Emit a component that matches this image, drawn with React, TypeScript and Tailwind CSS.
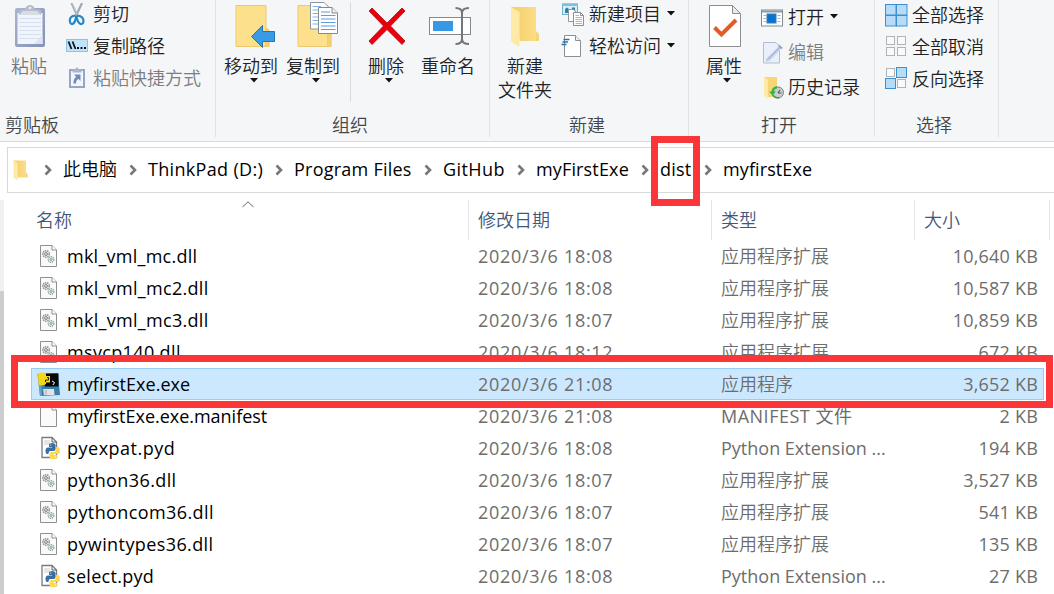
import React, { type ReactNode } from "react";

function Caret() {
  return (
    <svg width="8" height="5" viewBox="0 0 8 5" className="shrink-0">
      <path d="M0 0H8L4 4.500Z" fill="#111" />
    </svg>
  );
}

/* ---------- large ribbon icons (48 x 50 boxes) ---------- */

function PasteIcon() {
  return (
    <svg width="48" height="50" viewBox="0 0 48 50">
      <defs>
        <linearGradient id="clip" x1="0" y1="0" x2="1" y2="1">
          <stop offset="0" stopColor="#a9b4d2" />
          <stop offset="1" stopColor="#8492b9" />
        </linearGradient>
      </defs>
      <rect x="10" y="8" width="30" height="39" rx="2" fill="url(#clip)" />
      <path d="M12.500 13H37.500V44H12.500Z" fill="#f0f4fb" />
      <path d="M14 18.500H36M14 22.500H36M14 26.500H36M14 30.500H36M14 34.500H36M14 38.500H36" stroke="#d6dfee" />
      <path d="M29 44L37.500 35V44Z" fill="#dde3f0" />
      <path d="M14 15V11Q14 9.500 16 9.500H20Q21 5 25 5T30 9.500H34Q36 9.500 36 11V15Z" fill="#b7bdca" />
      <path d="M14 15L18 11H32L36 15Z" fill="#d9dce3" />
      <circle cx="25" cy="8" r="1.300" fill="#eceef2" />
    </svg>
  );
}

function FolderBase() {
  return (
    <g transform="translate(7.500 0)">
      <path d="M29 32L34 28L36 31V46.500H29Z" fill="#f3cd69" />
      <path d="M2.500 5.500H32.500V46.500H2.500Z" fill="#fde08c" stroke="#edca72" />
      <path d="M32.500 32V46.500H35.500V31L33 28" fill="#f5d477" stroke="#e6c269" strokeWidth=".7" />
    </g>
  );
}

function MoveToIcon() {
  return (
    <svg width="48" height="50" viewBox="0 0 48 50" className="relative -left-px overflow-visible">
      <FolderBase />
      <path d="M25.500 36.500L36.500 25.500V31.500H48.500V41.500H36.500V47.500Z" fill="#399be6" stroke="#2477b7" />
    </svg>
  );
}

function CopyToIcon() {
  return (
    <svg width="48" height="50" viewBox="0 0 48 50" className="relative -left-px overflow-visible">
      <FolderBase />
      <path d="M22.500 2.500H36L41 7.500V29H22.500Z" fill="#fff" stroke="#8d969f" />
      <path d="M24.500 6.500H33M24.500 10H30M24.500 13.500H30M24.500 17H30M24.500 20.500H30M24.500 24H30" stroke="#83b4e2" />
      <path d="M30.500 7.500H44L49.500 13V33.500H30.500Z" fill="#fff" stroke="#818a93" />
      <path d="M44 7.500V13H49.500" fill="#eee" stroke="#818a93" />
      <path d="M33 12H42M33 15.500H47.500M33 19H47.500M33 22.500H47.500M33 26H47.500M33 29.500H47.500" stroke="#5b9ce2" strokeWidth="1.200" />
    </svg>
  );
}

function DeleteIcon() {
  return (
    <svg width="48" height="50" viewBox="0 0 48 50">
      <path d="M7 11L10 8L25 23L40 8L43 11L28.500 26L43 41L40 44.500L25 29.500L10 44.500L7 41L21.500 26Z" fill="#e8000d" stroke="#b9000c" strokeWidth=".8" />
    </svg>
  );
}

function RenameIcon() {
  return (
    <svg width="48" height="50" viewBox="0 0 48 50">
      <rect x="5.500" y="17.500" width="41" height="17" fill="#fff" stroke="#85898c" />
      <rect x="9" y="21" width="20" height="10" fill="#3799e5" />
      <path d="M31.500 8C35 8 38 9 38 13V39C38 43 35 44 31.500 44M45 8C41 8 38 9 38 13M45 44C41 44 38 43 38 39" fill="none" stroke="#70777b" strokeWidth="2" />
    </svg>
  );
}

function OpenFolder({ small = false }: { small?: boolean }) {
  return (
    <svg width={small ? 15 : 48} height={small ? 23 : 50} viewBox={small ? "9 4 30 46" : "0 0 48 50"}>
      <defs>
        <linearGradient id="folder" x1="0" x2="1">
          <stop offset="0" stopColor="#f4cc67" />
          <stop offset="1" stopColor="#fde08b" />
        </linearGradient>
      </defs>
      <path d="M10 7H35V32L38 36V41H19Z" fill="url(#folder)" />
      <path d="M35 31L38 34V41H35Z" fill="#f5d47a" />
      <path d="M10 7L18.500 12V47L10 41.500Z" fill="#ffe9a7" />
    </svg>
  );
}

function PropertiesIcon() {
  return (
    <svg width="48" height="50" viewBox="0 0 48 50">
      <path d="M9.500 5.500H32.500L40.500 13.500V46.500H9.500Z" fill="#fff" stroke="#8e8e8e" />
      <path d="M32.500 5.500V13.500H40.500Z" fill="#eaeaea" stroke="#8e8e8e" />
      <path d="M14.500 27.500L21.500 34.500L36 20" fill="none" stroke="#e65b24" strokeWidth="4" />
    </svg>
  );
}

/* ---------- small ribbon icons (24 x 24 boxes) ---------- */

function Small({ children }: { children: ReactNode }) {
  return (
    <svg width="24" height="24" viewBox="0 0 24 24" className="shrink-0">
      {children}
    </svg>
  );
}

function CutIcon() {
  return (
    <Small>
      <path d="M6.500 0L13 14M17 0L10.500 14" stroke="#a3a8ae" strokeWidth="2.200" />
      <path d="M7.200 .5L13 13" stroke="#cfd3d6" strokeWidth=".8" />
      <path d="M10.500 12.500Q4.800 13 4.800 17.500Q5.200 21.500 7.500 21Q10.500 19.500 11.300 13Q12.500 19.500 15.500 21Q18.500 21.500 18.500 17.500Q18 13 12 12.500" fill="none" stroke="#2787c7" strokeWidth="2.200" />
    </Small>
  );
}

function PathIcon() {
  return (
    <Small>
      <rect x="1.500" y="5.500" width="21" height="12" fill="#bfe3fd" stroke="#8cc3ee" />
      <path d="M3.500 7.500L6.500 15M7.500 7.500L10.500 15" stroke="#111" strokeWidth="1.800" />
      <path d="M12 14H14M15.500 14H17.500M19 14H21" stroke="#111" strokeWidth="1.800" />
    </Small>
  );
}

function ShortcutIcon() {
  return (
    <Small>
      <rect x="5" y="3" width="14" height="17" fill="#f3f6fc" stroke="#96a5c8" strokeWidth="2" />
      <path d="M7.500 5.500V2.500H10L12 0L14 2.500H16.500V5.500Z" fill="#aab4cb" />
      <path d="M9 7.500H15.500V14L13.300 11.800Q10.800 13.500 11 16.500H8.500Q8 12.500 11.200 9.700Z" fill="#7589b5" />
    </Small>
  );
}

function NewItemIcon() {
  return (
    <Small>
      <rect x="1.500" y="1" width="15" height="10.500" fill="#d8effb" stroke="#6fb0cb" />
      <path d="M1 .5H17V3H1Z" fill="#82bfd9" />
      <path d="M4 10V6L6 4.500L8 6V10ZM11 4.500H14V8H11Z" fill="#397b9e" />
      <path d="M7.500 6.500H12L14.500 8V18.500H7.500Z" fill="#fff" stroke="#8d989f" />
      <path d="M12.500 9.500H19.500L22.500 12.500V22.500H12.500Z" fill="#fff" stroke="#8b8f94" />
      <path d="M19.500 9.500V12.500H22.500" fill="none" stroke="#8b8f94" />
      <path d="M14.500 12.500H18M14.500 14.500H21M14.500 16.500H21M14.500 18.500H21M14.500 20.500H21" stroke="#d48e86" strokeWidth=".8" />
    </Small>
  );
}

function EasyAccessIcon() {
  return (
    <Small>
      <path d="M3.500 .5H14.500L19.500 5.500V21.500H3.500Z" fill="#fff" stroke="#8b8f94" />
      <path d="M14.500 .5V5.500H19.500" fill="#eee" stroke="#8b8f94" />
      <path d="M2.500 4.500H8.500M1.500 7H7M.5 9.500H5.500" stroke="#2d72a8" strokeWidth="1.400" />
    </Small>
  );
}

function OpenIcon() {
  return (
    <Small>
      <rect x="1.500" y="4" width="21" height="16" fill="#fff" stroke="#7f8b93" />
      <path d="M2 4.500H22V6.500H2Z" fill="#8c9ba5" />
      <path d="M3.500 9.500H6M3.500 12.500H6M3.500 15.500H6M17.500 9.500H20.500M17.500 12.500H20.500M17.500 15.500H20.500" stroke="#a4b4bd" />
      <rect x="7" y="8" width="9" height="9" fill="#0873cf" stroke="#2e80ba" />
    </Small>
  );
}

function EditIcon() {
  return (
    <Small>
      <path d="M3.500 1.500H16L19.500 5V22H3.500Z" fill="#eaf0fa" stroke="#b1bdd5" />
      <path d="M6 18L19 5L22 7L9.500 20L5.500 21Z" fill="#c6d2e6" />
      <path d="M7.500 18.500L19.500 6.500" stroke="#98a8c8" strokeWidth="1" />
      <path d="M19 3.500L23 7L21 8L18 5Z" fill="#93a4c5" />
    </Small>
  );
}

function HistoryIcon() {
  return (
    <Small>
      <path d="M4 1H17V21H8Z" fill="#f8d676" />
      <path d="M4 1L8 4V23L4 20Z" fill="#ffe9a7" />
      <circle cx="18" cy="16.500" r="5.500" fill="#c9ced0" stroke="#777f82" />
      <path d="M18 17L20 14M18 17H21.500" fill="none" stroke="#53595c" strokeWidth="1.200" />
      <path d="M17 10Q11.500 11 11.500 15.500H9L12.500 19.500L16 15.500H14Q14 13 17 12.500Z" fill="#39b44a" />
      <path d="M12.500 19Q15 22.500 19 21.500" fill="none" stroke="#479c50" strokeWidth="1.300" />
    </Small>
  );
}

function SelectIcon({ on }: { on: boolean[] }) {
  const all = on.every(Boolean);
  return (
    <Small>
      {on.map((v, i) => (
        <rect
          key={i}
          x={(v ? 1.5 : 2.5) + (i % 2) * 11}
          y={(v ? 0.5 : 1.5) + Math.floor(i / 2) * 11}
          width={v ? (all ? 10.5 : 10) : 8}
          height={v ? (all ? 10.5 : 10) : 8}
          fill={v ? "#b6dcfa" : "#fafafa"}
          stroke={v ? "#3f90ca" : "#b0b2b4"}
        />
      ))}
    </Small>
  );
}

/* ---------- ribbon building blocks ---------- */

function Big({ icon, label, width, caret, muted }: { icon: ReactNode; label: string[]; width: string; caret?: boolean; muted?: boolean }) {
  return (
    <div className={`flex shrink-0 flex-col items-center ${width}`}>
      <div className="h-[54px]">{icon}</div>
      {label.map((l) => (
        <div key={l} className={`h-6 whitespace-nowrap leading-6 ${muted ? "text-[#737578]" : "text-[#222]"}`}>{l}</div>
      ))}
      {caret && <div className="flex pl-[5px]"><Caret /></div>}
    </div>
  );
}

function Row({ icon, label, height, caret, muted }: { icon: ReactNode; label: string; height: string; caret?: boolean; muted?: boolean }) {
  return (
    <div className={`flex items-center whitespace-nowrap ${height}`}>
      {icon}
      <span className={`ml-1 ${muted ? "text-[#7b7d80]" : "text-[#222]"}`}>{label}</span>
      {caret && <span className="-mt-0.5 ml-[6px] flex"><Caret /></span>}
    </div>
  );
}

function Group({ width, pad, label, labelPad, children }: { width: string; pad: string; label: string; labelPad: string; children: ReactNode }) {
  return (
    <div className={`flex h-full shrink-0 flex-col ${width}`}>
      <div className="flex h-[137px] flex-col border-r border-[#e0e2e4]">
        <div className={`flex h-[113px] ${pad}`}>{children}</div>
        <div className={`h-6 leading-6 text-[#444649] ${labelPad}`}>{label}</div>
      </div>
    </div>
  );
}

function Ribbon() {
  return (
    <div className="flex h-[142px] shrink-0 border-b border-[#d9dbdd] bg-[#f5f6f8] font-[350]">
      <Group width="w-[216px]" pad="" label="剪贴板" labelPad="pl-[5px]">
        <Big width="w-[58px]" icon={<PasteIcon />} label={["粘贴"]} muted />
        <div className="ml-[7px]">
          <Row height="h-[29px]" icon={<CutIcon />} label="剪切" />
          <Row height="h-[34px]" icon={<PathIcon />} label="复制路径" />
          <Row height="h-[31px]" icon={<ShortcutIcon />} label="粘贴快捷方式" muted />
        </div>
      </Group>
      <Group width="w-[274px]" pad="pl-[4px]" label="组织" labelPad="pl-[116px]">
        <Big width="w-[62px]" icon={<MoveToIcon />} label={["移动到"]} caret />
        <Big width="w-[62px]" icon={<CopyToIcon />} label={["复制到"]} caret />
        <div className="ml-[6px] mr-[4px] mt-0.5 h-[100px] w-px bg-[#d8dadc]" />
        <Big width="w-[62px]" icon={<DeleteIcon />} label={["删除"]} caret />
        <Big width="w-[62px]" icon={<RenameIcon />} label={["重命名"]} />
      </Group>
      <Group width="w-[199px]" pad="pl-[4px]" label="新建" labelPad="pl-[79px]">
        <Big width="w-[62px]" icon={<OpenFolder />} label={["新建", "文件夹"]} />
        <div className="ml-[5px]">
          <Row height="h-[29px]" icon={<NewItemIcon />} label="新建项目" caret />
          <Row height="h-[35px]" icon={<EasyAccessIcon />} label="轻松访问" caret />
        </div>
      </Group>
      <Group width="w-[186px]" pad="pl-[4px]" label="打开" labelPad="pl-[72px]">
        <Big width="w-[62px]" icon={<PropertiesIcon />} label={["属性"]} caret />
        <div className="ml-[5px]">
          <Row height="h-[35px]" icon={<OpenIcon />} label="打开" caret />
          <Row height="h-[35px]" icon={<EditIcon />} label="编辑" muted />
          <Row height="h-[35px]" icon={<HistoryIcon />} label="历史记录" />
        </div>
      </Group>
      <Group width="w-[124px]" pad="pl-[9px]" label="选择" labelPad="pl-[41px]">
        <div>
          <Row height="h-[31px]" icon={<SelectIcon on={[true, true, true, true]} />} label="全部选择" />
          <Row height="h-[32px]" icon={<SelectIcon on={[false, false, false, false]} />} label="全部取消" />
          <Row height="h-[32px]" icon={<SelectIcon on={[false, true, true, false]} />} label="反向选择" />
        </div>
      </Group>
    </div>
  );
}

/* ---------- address bar ---------- */

const crumbs = [
  { text: "此电脑", width: "w-[85px] font-[350]" },
  { text: "ThinkPad (D:)", width: "w-[146px] tracking-[0.32px]" },
  { text: "Program Files", width: "w-[149px] tracking-[0.24px]" },
  { text: "GitHub", width: "w-[93px] tracking-[0.42px]" },
  { text: "myFirstExe", width: "w-[124px] tracking-[0.15px]" },
  { text: "dist", width: "w-[63px] tracking-[0.2px]" },
  { text: "myfirstExe", width: "w-[140px] tracking-[0.1px]" },
];

function AddressBar() {
  return (
    <div className="ml-[7px] mt-[5px] flex h-[46px] shrink-0 items-center border-y border-l border-[#d6dad8] bg-white pl-[5px]">
      <OpenFolder small />
      <div className="ml-4 flex">
        {crumbs.map((c) => (
          <div key={c.text} className={`flex items-center whitespace-nowrap text-black ${c.width}`}>
            <svg width="19" height="12" viewBox="0 0 19 12" className="shrink-0">
              <path d="M1.500 1.500L6 6L1.500 10.500" fill="none" stroke="#777" strokeWidth="2.600" />
            </svg>
            <span className="-mt-0.5">{c.text}</span>
          </div>
        ))}
      </div>
    </div>
  );
}

/* ---------- file icons ---------- */

function Page({ children }: { children?: ReactNode }) {
  return (
    <svg width="24" height="24" viewBox="0 0 24 24" className="shrink-0">
      <path d="M4.500 1.500H16L20.500 6V22.500H4.500Z" fill="#fafafa" stroke="#8d8f91" />
      <path d="M16 1.500V6H20.500" fill="#fff" stroke="#8d8f91" />
      {children}
    </svg>
  );
}

function DllIcon() {
  return (
    <Page>
      <circle cx="10" cy="10" r="3.300" fill="#e3e5e6" stroke="#97999b" strokeWidth="1.500" strokeDasharray="1.500 .8" />
      <circle cx="10" cy="10" r="1.400" fill="#fff" stroke="#777b7d" />
      <circle cx="15" cy="15.500" r="2.800" fill="#e4efed" stroke="#86a09d" strokeWidth="1.300" strokeDasharray="1.300 .8" />
      <circle cx="15" cy="15.500" r="1" fill="#fff" stroke="#6d8683" strokeWidth=".8" />
    </Page>
  );
}

function PydIcon() {
  return (
    <svg width="24" height="24" viewBox="0 0 24 24" className="shrink-0">
      <path d="M6 1.500H16L20.500 6V21.500H6Z" fill="#fff" stroke="#777b7f" strokeWidth="1.300" />
      <path d="M16 1.500V6H20.500" fill="none" stroke="#5d6165" />
      <path d="M8 4H14V9H8Z" fill="#e5e5e5" />
      <path d="M13 11V8.800Q13 7 16 7T19.500 8.800V13Q19.500 15 17.500 15H14.500Q12.500 15 12.500 18H11.500Q9.500 18 9.500 15Q9.500 11.500 12 11.500H16V11Z" fill="#376fa5" />
      <path d="M20 11H21.500Q24 11 24 15Q24 18 22 18H17.500V19H21V21Q21 23 17.500 23T13.500 21V18Q13.500 16 15.500 16H18Q20 16 20 14Z" fill="#ffd94d" />
      <circle cx="14.800" cy="9" r=".6" fill="#fff" />
      <circle cx="19.200" cy="21" r=".6" fill="#fff" />
    </svg>
  );
}

function ExeIcon() {
  return (
    <svg width="24" height="26" viewBox="0 0 24 26" className="shrink-0">
      <path d="M1.500 3L22 2L24 24L4 25Z" fill="#367eae" />
      <path d="M2 5L4 25L6 25L5 5Z" fill="#6c9fc0" />
      <path d="M9 2.500H22.500V15.500H9Z" fill="#080808" />
      <path d="M2 2.500Q6 .5 10 2.500V5H14V11.500H10V13Q6 15.500 2.500 13.500Z" fill="#f5d719" />
      <path d="M11 6.500H12.500V9H9.500V11" fill="none" stroke="#222" />
      <path d="M16 10L18.500 11.500L17 14" fill="none" stroke="#fff" />
      <path d="M7 18H18L18.500 24H8Z" fill="#e2e3e3" />
      <path d="M8.500 19H11V23.500H9Z" fill="#c1c5c7" />
    </svg>
  );
}

/* ---------- file list ---------- */

type Kind = "dll" | "exe" | "file" | "pyd";

const files: { name: string; track: string; date: string; type: string; size: string; kind: Kind }[] = [
  { name: "mkl_vml_mc.dll", track: "tracking-[0.25px]", date: "2020/3/6 18:08", type: "应用程序扩展", size: "10,640 KB", kind: "dll" },
  { name: "mkl_vml_mc2.dll", track: "tracking-[0.3px]", date: "2020/3/6 18:08", type: "应用程序扩展", size: "10,587 KB", kind: "dll" },
  { name: "mkl_vml_mc3.dll", track: "tracking-[0.3px]", date: "2020/3/6 18:07", type: "应用程序扩展", size: "10,859 KB", kind: "dll" },
  { name: "msvcp140.dll", track: "tracking-[0.35px]", date: "2020/3/6 18:12", type: "应用程序扩展", size: "672 KB", kind: "dll" },
  { name: "myfirstExe.exe", track: "tracking-[0.05px]", date: "2020/3/6 21:08", type: "应用程序", size: "3,652 KB", kind: "exe" },
  { name: "myfirstExe.exe.manifest", track: "tracking-[-0.02px]", date: "2020/3/6 21:08", type: "MANIFEST 文件", size: "2 KB", kind: "file" },
  { name: "pyexpat.pyd", track: "tracking-[0.5px]", date: "2020/3/6 18:08", type: "Python Extension ...", size: "194 KB", kind: "pyd" },
  { name: "python36.dll", track: "tracking-[0.4px]", date: "2020/3/6 18:07", type: "应用程序扩展", size: "3,527 KB", kind: "dll" },
  { name: "pythoncom36.dll", track: "tracking-[0.4px]", date: "2020/3/6 18:07", type: "应用程序扩展", size: "541 KB", kind: "dll" },
  { name: "pywintypes36.dll", track: "tracking-[0.4px]", date: "2020/3/6 18:07", type: "应用程序扩展", size: "135 KB", kind: "dll" },
  { name: "select.pyd", track: "tracking-[0.3px]", date: "2020/3/6 18:08", type: "Python Extension ...", size: "27 KB", kind: "pyd" },
];

function FileIcon({ kind }: { kind: Kind }) {
  if (kind === "dll") return <DllIcon />;
  if (kind === "exe") return <ExeIcon />;
  if (kind === "pyd") return <PydIcon />;
  return <Page />;
}

function FileRow({ file }: { file: (typeof files)[number] }) {
  const selected = file.kind === "exe";
  const typeStyle = file.kind === "dll" || selected ? "font-[350]" : file.kind === "file" ? "tracking-[0.5px]" : "";
  return (
    <div
      className={`ml-[27px] mr-[10px] grid h-8 grid-cols-[437px_243px_203px_1fr] items-center whitespace-nowrap text-[#6d6d6d] ${
        selected ? "bg-[#cce8ff] shadow-[inset_0_0_0_1px_#99cdf5]" : ""
      }`}
    >
      <div className="flex items-center pl-[5px] text-black">
        <FileIcon kind={file.kind} />
        <span className={`ml-[7px] ${file.track}`}>{file.name}</span>
      </div>
      <div className="pl-[10px] tracking-[0.7px]">{file.date}</div>
      <div className={`pl-[10px] ${typeStyle}`}>{file.type}</div>
      <div className="pr-[6px] text-right tracking-[0.2px]">{file.size}</div>
    </div>
  );
}

function FileList() {
  return (
    <div className="mt-[7px] flex flex-1">
      <div className="w-1 shrink-0 bg-[#f0f0f0] pt-[91px]">
        <div className="h-[303px] bg-[#cdcdcd]" />
      </div>
      <div className="flex flex-1 flex-col">
        <div className="flex h-10 font-[350] text-[#43577a]">
          <div className="relative flex w-[465px] items-center border-r border-[#e3e5e7] pl-8">
            名称
            <svg width="12" height="7" viewBox="0 0 12 7" className="absolute left-[238px] top-[1px]">
              <path d="M.5 6L6 .8L11.500 6" fill="none" stroke="#666" />
            </svg>
          </div>
          <div className="flex w-[243px] items-center border-r border-[#e3e5e7] pl-[9px]">修改日期</div>
          <div className="flex w-[203px] items-center border-r border-[#e3e5e7] pl-[9px]">类型</div>
          <div className="flex w-[135px] items-center border-r border-[#e3e5e7] pl-[9px]">大小</div>
        </div>
        {files.map((f) => (
          <FileRow key={f.name} file={f} />
        ))}
      </div>
    </div>
  );
}

export default function App() {
  return (
    <div className="relative flex h-[594px] w-[1054px] flex-col overflow-hidden bg-white font-['Open_Sans','Noto_Sans_CJK_SC',sans-serif] text-[18px]">
      <Ribbon />
      <AddressBar />
      <FileList />
      <div className="absolute left-[651px] top-[136px] h-[70px] w-[49px] border-[7px] border-[#fa3638]" />
      <div className="absolute left-[11px] top-[355px] h-[53px] w-[1042px] border-[7px] border-[#fa3638]" />
    </div>
  );
}
